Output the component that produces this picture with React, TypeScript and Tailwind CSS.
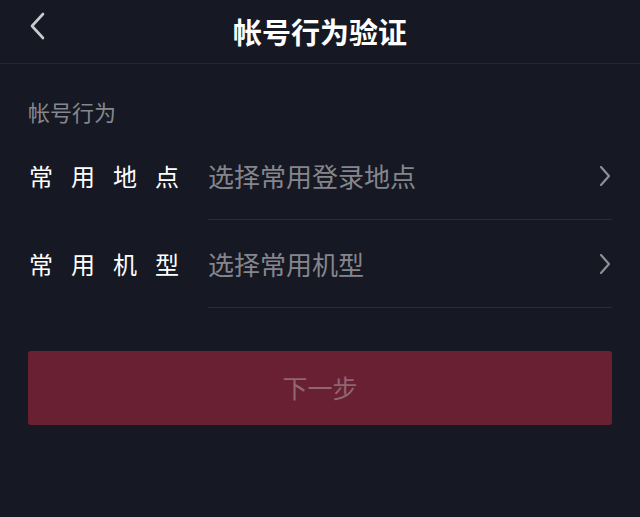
const font = { fontFamily: '"Noto Sans CJK SC", "Noto Sans", sans-serif' }

function ChevronLeft() {
  return (
    <svg width="18" height="28" viewBox="0 0 18 28" fill="none">
      <path d="M14 2 L3 14 L14 26" stroke="#c9cacf" strokeWidth="2.6" strokeLinecap="round" strokeLinejoin="round" />
    </svg>
  )
}

function ChevronRight() {
  return (
    <svg width="14" height="22" viewBox="0 0 14 22" fill="none">
      <path d="M3 2 L11 11 L3 20" stroke="#8d8e94" strokeWidth="2.2" strokeLinecap="round" strokeLinejoin="round" />
    </svg>
  )
}

interface RowProps {
  label: string
  placeholder: string
}

function Row({ label, placeholder }: RowProps) {
  return (
    <div className="flex h-[88px] items-stretch">
      <div className="flex w-[208px] items-center pl-[29px] text-[24px] tracking-[18px] text-white">{label}</div>
      <div className="mr-[28px] flex flex-1 items-center justify-between border-b border-[#2a2c37]">
        <span className="text-[26px] text-[#85868c]">{placeholder}</span>
        <ChevronRight />
      </div>
    </div>
  )
}

export default function App() {
  return (
    <div className="h-[517px] w-[640px] overflow-hidden bg-[#161823]" style={font}>
      <header className="relative flex h-[64px] items-center justify-center border-b border-[#252733]">
        <div className="absolute left-[29px] top-[12px]">
          <ChevronLeft />
        </div>
        <h1 className="text-[29px] font-bold text-white">帐号行为验证</h1>
      </header>

      <div className="mt-[32px] h-[36px] pl-[28px] text-[22px] leading-[30px] text-[#86878d]">帐号行为</div>

      <Row label="常用地点" placeholder="选择常用登录地点" />
      <Row label="常用机型" placeholder="选择常用机型" />

      <div className="mx-[28px] mt-[43px]">
        <button className="flex h-[74px] w-full items-center justify-center rounded-[3px] bg-[#6a2033] text-[25px] text-[#8f6672]">
          下一步
        </button>
      </div>
    </div>
  )
}
